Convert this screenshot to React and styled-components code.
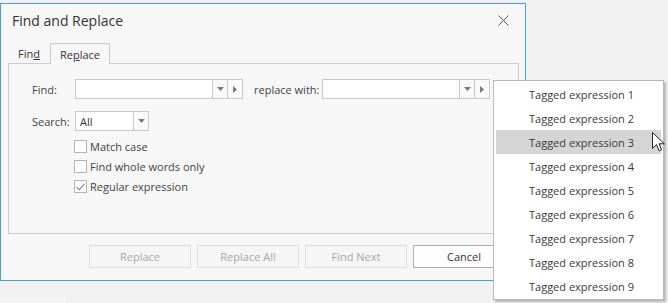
import React from "react";
import styled, { createGlobalStyle } from "styled-components";

const Global = createGlobalStyle`
    body {
        margin: 0;
        background: #f1f1f1;
        font-family: "Segoe UI", "Open Sans", "Noto Sans", sans-serif;
        color: #444;
    }
`;

const Screen = styled.div`
    position: relative;
    width: 668px;
    height: 303px;
    overflow: hidden;
    padding-top: 3px;
    box-sizing: border-box;
`;

const Dialog = styled.div`
    width: 526px;
    height: 278px;
    box-sizing: border-box;
    border: 1px solid #4a9fd3;
    background: #f7f7f7;
    display: flex;
    flex-direction: column;
`;

const TitleBar = styled.div`
    height: 32px;
    display: flex;
    align-items: center;
    justify-content: space-between;
    padding: 0 16px 0 11px;
`;

const Title = styled.div`
    font-size: 14px;
    color: #333;
`;

const TabStrip = styled.div`
    display: flex;
    align-items: flex-end;
    margin: 6px 0 0 7px;
    height: 21px;
    font-size: 11px;
`;

const Tab = styled.div`
    width: ${(p) => p.$w}px;
    height: ${(p) => (p.$active ? "21px" : "20px")};
    display: flex;
    align-items: center;
    justify-content: center;
    box-sizing: border-box;
    border: 1px solid ${(p) => (p.$active ? "#cccccc" : "transparent")};
    border-bottom: none;
    background: #f7f7f7;
    margin-bottom: ${(p) => (p.$active ? "-1px" : "0")};
    position: relative;
    color: #333;
`;

const Panel = styled.div`
    margin: 0 6px 0 7px;
    height: 171px;
    box-sizing: border-box;
    border: 1px solid #cccccc;
    padding: 15px 0 0 23px;
    display: flex;
    flex-direction: column;
    font-size: 11px;
`;

const Row = styled.div`
    display: flex;
    align-items: center;
    height: 20px;
    margin-bottom: ${(p) => p.$mb || 0}px;
`;

const Label = styled.div`
    width: ${(p) => p.$w || 43}px;
    margin-left: ${(p) => p.$ml || 0}px;
    white-space: nowrap;
    color: #444;
`;

const Field = styled.div`
    width: ${(p) => p.$w}px;
    height: 20px;
    box-sizing: border-box;
    border: 1px solid #c9c9c9;
    background: #ffffff;
    display: flex;
    align-items: center;
    padding-left: 4px;
    color: #333;
`;

const SideBtn = styled.div`
    width: 15px;
    height: 20px;
    box-sizing: border-box;
    border: 1px solid #c9c9c9;
    border-left: none;
    background: #fafafa;
    display: flex;
    align-items: center;
    justify-content: center;
`;

const Checks = styled.div`
    display: flex;
    flex-direction: column;
    gap: 7px;
    margin: 9px 0 0 42px;
`;

const CheckRow = styled.label`
    display: flex;
    align-items: center;
    height: 13px;
    gap: 3px;
    color: #444;
`;

const Box = styled.span`
    width: 13px;
    height: 13px;
    box-sizing: border-box;
    border: 1px solid #b5b5b5;
    background: #ffffff;
    display: flex;
    align-items: center;
    justify-content: center;
`;

const ButtonRow = styled.div`
    display: flex;
    justify-content: flex-end;
    gap: 6px;
    padding-right: 10px;
    margin-top: 11px;
`;

const Button = styled.div`
    width: 102px;
    height: 23px;
    box-sizing: border-box;
    border: 1px solid ${(p) => (p.$disabled ? "#dddddd" : "#adadad")};
    background: ${(p) => (p.$disabled ? "#f5f5f5" : "#fdfdfd")};
    color: ${(p) => (p.$disabled ? "#a8a8a8" : "#333")};
    display: flex;
    align-items: center;
    justify-content: center;
    font-size: 11px;
`;

const Popup = styled.div`
    position: absolute;
    left: 493px;
    top: 80px;
    width: 171px;
    box-sizing: border-box;
    border: 1px solid #b9b9b9;
    background: #ffffff;
    padding: 1px 2px 1px;
    box-shadow: 2px 2px 2px rgba(0, 0, 0, 0.25);
    font-size: 11px;
`;

const Item = styled.div`
    height: 24px;
    display: flex;
    align-items: center;
    padding-left: 33px;
    background: ${(p) => (p.$hover ? "#d5d5d5" : "transparent")};
    color: #3a3a3a;
`;

const Cursor = styled.svg`
    position: absolute;
    left: 652px;
    top: 132px;
`;

const BottomStrip = styled.div`
    position: absolute;
    left: 0;
    bottom: 0;
    width: 66px;
    height: 6px;
    background: #f6f6f6;
`;

const Down = () => (
    <svg width="7" height="4" viewBox="0 0 7 4">
        <path d="M0 0h7L3.5 4z" fill="#7a7a7a" />
    </svg>
);

const Right = () => (
    <svg width="4" height="7" viewBox="0 0 4 7">
        <path d="M0 0v7L4 3.5z" fill="#7a7a7a" />
    </svg>
);

const Combo = ({ w }) => (
    <>
        <Field $w={w} />
        <SideBtn>
            <Down />
        </SideBtn>
        <SideBtn>
            <Right />
        </SideBtn>
    </>
);

const Check = ({ checked, children }) => (
    <CheckRow>
        <Box>
            {checked && (
                <svg width="9" height="8" viewBox="0 0 9 8">
                    <path d="M0.5 4.2 L3.2 6.8 L8.5 0.8" fill="none" stroke="#555" strokeWidth="1" />
                </svg>
            )}
        </Box>
        {children}
    </CheckRow>
);

const items = [1, 2, 3, 4, 5, 6, 7, 8, 9];

const App = () => {
    return (
        <Screen>
            <Global />
            <Dialog>
                <TitleBar>
                    <Title>Find and Replace</Title>
                    <svg width="11" height="11" viewBox="0 0 11 11">
                        <path d="M0.5 0.5L10.5 10.5M10.5 0.5L0.5 10.5" stroke="#555" strokeWidth="1" />
                    </svg>
                </TitleBar>
                <TabStrip>
                    <Tab $w={42}>
                        <span>
                            Fin<u>d</u>
                        </span>
                    </Tab>
                    <Tab $w={60} $active>
                        <span>
                            Re<u>p</u>lace
                        </span>
                    </Tab>
                </TabStrip>
                <Panel>
                    <Row $mb={12}>
                        <Label>Find:</Label>
                        <Combo w={138} />
                        <Label $w={68} $ml={11}>
                            replace with:
                        </Label>
                        <Combo w={138} />
                    </Row>
                    <Row>
                        <Label>Search:</Label>
                        <Field $w={59}>All</Field>
                        <SideBtn>
                            <Down />
                        </SideBtn>
                    </Row>
                    <Checks>
                        <Check>Match case</Check>
                        <Check>Find whole words only</Check>
                        <Check checked>Regular expression</Check>
                    </Checks>
                </Panel>
                <ButtonRow>
                    <Button $disabled>Replace</Button>
                    <Button $disabled>Replace All</Button>
                    <Button $disabled>Find Next</Button>
                    <Button>Cancel</Button>
                </ButtonRow>
            </Dialog>
            <BottomStrip />
            <Popup>
                {items.map((n) => (
                    <Item key={n} $hover={n === 3}>
                        Tagged expression {n}
                    </Item>
                ))}
            </Popup>
            <Cursor width="13" height="20" viewBox="0 0 13 20">
                <path d="M0.5 0.5V16.5L4.5 12.5L7.2 18.8L9.6 17.8L7 11.8H12.3Z" fill="#fff" stroke="#222" strokeWidth="1" strokeLinejoin="round" />
            </Cursor>
        </Screen>
    );
};

export default App;
